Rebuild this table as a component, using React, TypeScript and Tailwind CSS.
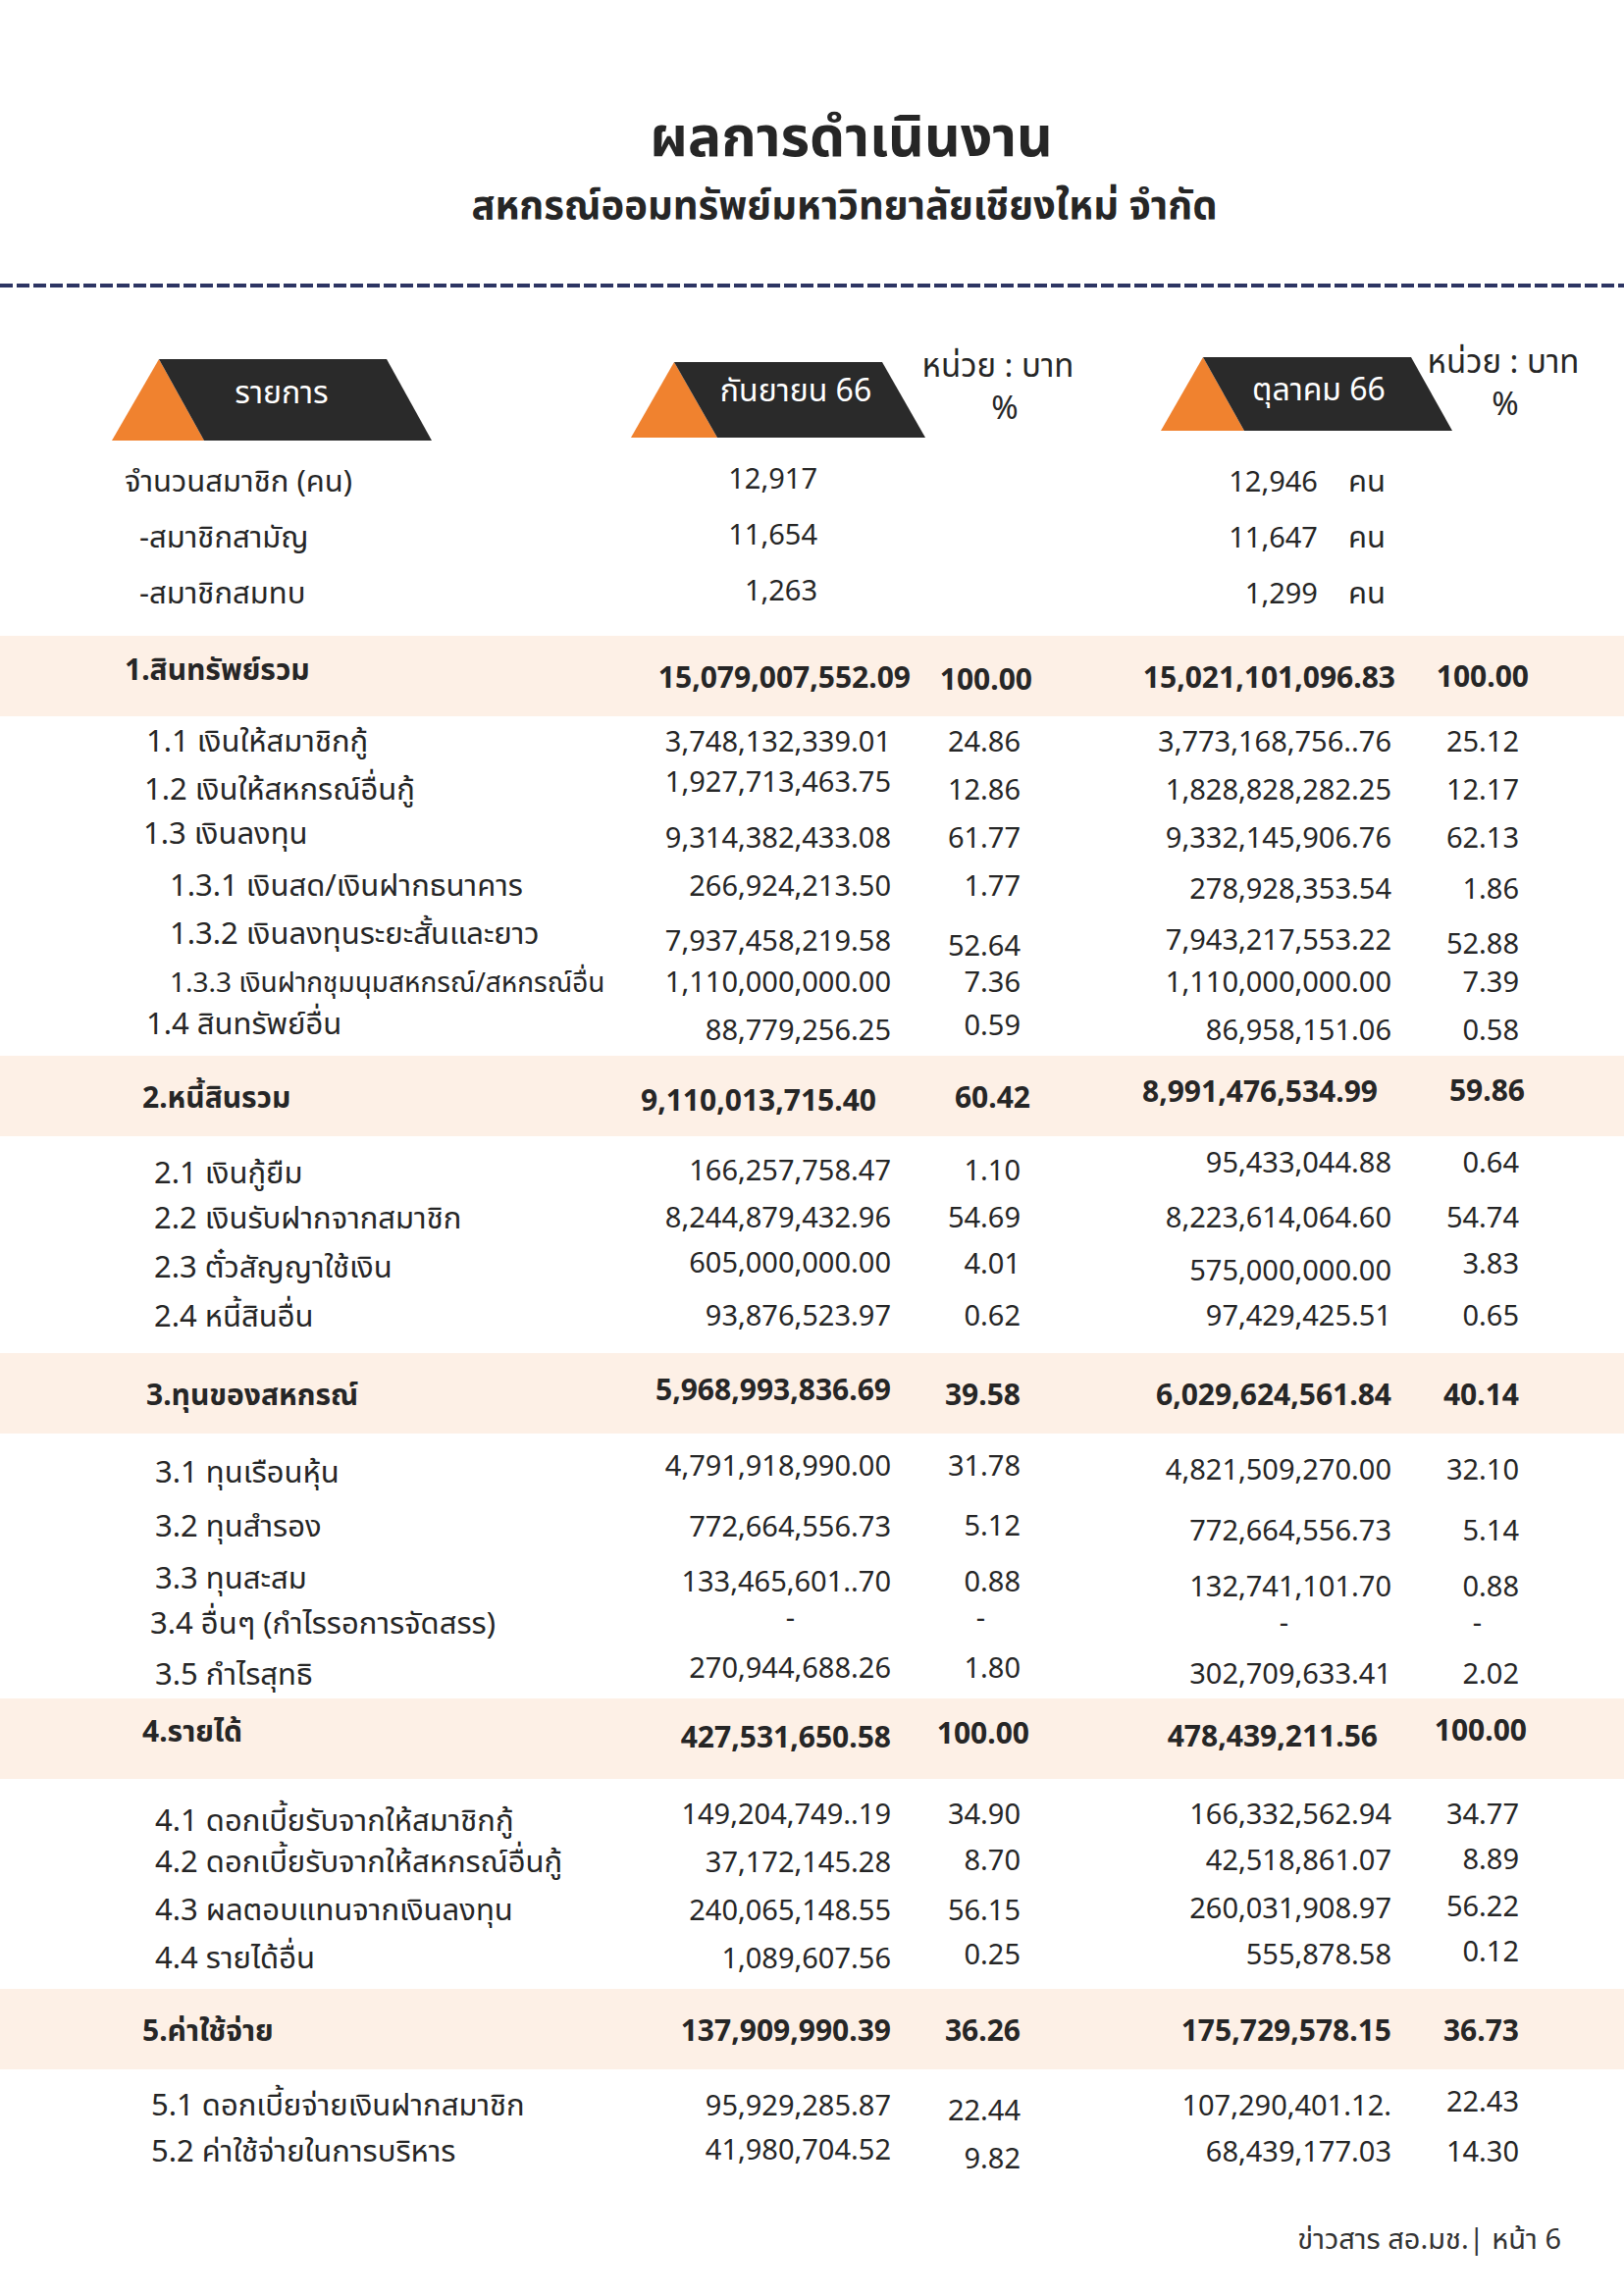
import React from "react";

// ตารางผลการดำเนินงาน เทียบ ก.ย. 66 / ต.ค. 66
type Fila = {
  t: string;
  v1: string;
  p1: string;
  v2: React.ReactNode;
  p2: string;
  pl: string;
  fs?: string; // ขนาดตัวอักษรของ label (ถ้าไม่ใช้ค่าปกติ)
  c?: string[]; // class เสริมของแต่ละช่อง [label, v1, p1, v2, p2]
};

const SECCIONES: { h: string; mt: string; band: Fila; filas: Fila[] }[] = [
  {
    h: "h-[49px]",
    mt: "mt-0",
    band: { t: "1.สินทรัพย์รวม", v1: "15,079,007,552.09", p1: "100.00", v2: "15,021,101,096.83", p2: "100.00", pl: "pl-[127px]", c: ["pb-[16px]", "-mr-[20px]", "-mr-[12px] pt-[4px]", "-mr-[4px]", "-mr-[10px] pb-[2px]"] },
    filas: [
      { t: "1.1 เงินให้สมาชิกกู้", v1: "3,748,132,339.01", p1: "24.86", v2: "3,773,168,756..76", p2: "25.12", pl: "pl-[149px]" },
      { t: "1.2 เงินให้สหกรณ์อื่นกู้", v1: "1,927,713,463.75", p1: "12.86", v2: "1,828,828,282.25", p2: "12.17", pl: "pl-[147px]", c: ["", "pb-[16px]"] },
      { t: "1.3 เงินลงทุน", v1: "9,314,382,433.08", p1: "61.77", v2: "9,332,145,906.76", p2: "62.13", pl: "pl-[146px]", c: ["pb-[8px]"] },
      { t: "1.3.1 เงินสด/เงินฝากธนาคาร", v1: "266,924,213.50", p1: "1.77", v2: "278,928,353.54", p2: "1.86", pl: "pl-[173px]", c: ["", "", "", "pt-[6px]", "pt-[6px]"] },
      { t: "1.3.2 เงินลงทุนระยะสั้นและยาว", v1: "7,937,458,219.58", p1: "52.64", v2: "7,943,217,553.22", p2: "52.88", pl: "pl-[173px]", c: ["", "pt-[14px]", "pt-[24px]", "pt-[12px]", "pt-[20px]"] },
      { t: "1.3.3 เงินฝากชุมนุมสหกรณ์/สหกรณ์อื่น", v1: "1,110,000,000.00", p1: "7.36", v2: "1,110,000,000.00", p2: "7.39", pl: "pl-[173px]", fs: "text-[28px]" },
      { t: "1.4 สินทรัพย์อื่น", v1: "88,779,256.25", p1: "0.59", v2: "86,958,151.06", p2: "0.58", pl: "pl-[149px]", c: ["pb-[12px]", "", "pb-[10px]"] },
    ],
  },
  {
    h: "h-[50px]",
    mt: "mt-[3px]",
    band: { t: "2.หนี้สินรวม", v1: "9,110,013,715.40", p1: "60.42", v2: "8,991,476,534.99", p2: "59.86", pl: "pl-[145px]", c: ["", "pr-[15px] pt-[6px]", "-mr-[10px]", "pr-[14px] pb-[12px]", "-mr-[6px] pb-[14px]"] },
    filas: [
      { t: "2.1 เงินกู้ยืม", v1: "166,257,758.47", p1: "1.10", v2: "95,433,044.88", p2: "0.64", pl: "pl-[157px]", c: ["pt-[8px]", "pt-[4px]", "pt-[4px]", "pb-[12px]", "pb-[12px]"] },
      { t: "2.2 เงินรับฝากจากสมาชิก", v1: "8,244,879,432.96", p1: "54.69", v2: "8,223,614,064.60", p2: "54.74", pl: "pl-[157px]" },
      { t: "2.3 ตั๋วสัญญาใช้เงิน", v1: "605,000,000.00", p1: "4.01", v2: "575,000,000.00", p2: "3.83", pl: "pl-[157px]", c: ["", "pb-[8px]", "pb-[6px]", "pt-[8px]", "pb-[6px]"] },
      { t: "2.4 หนี้สินอื่น", v1: "93,876,523.97", p1: "0.62", v2: "97,429,425.51", p2: "0.65", pl: "pl-[157px]" },
    ],
  },
  {
    h: "h-[52px]",
    mt: "mt-[14px]",
    band: { t: "3.ทุนของสหกรณ์", v1: "5,968,993,836.69", p1: "39.58", v2: "6,029,624,561.84", p2: "40.14", pl: "pl-[149px]", c: ["", "pb-[10px]"] },
    filas: [
      { t: "3.1 ทุนเรือนหุ้น", v1: "4,791,918,990.00", p1: "31.78", v2: "4,821,509,270.00", p2: "32.10", pl: "pl-[158px]", c: ["pt-[4px]", "pb-[8px]", "pb-[8px]"] },
      { t: "3.2 ทุนสำรอง", v1: "772,664,556.73", p1: "5.12", v2: "772,664,556.73", p2: "5.14", pl: "pl-[158px]", c: ["pt-[10px]", "pt-[12px]", "pt-[10px]", "pt-[20px]", "pt-[20px]"] },
      { t: "3.3 ทุนสะสม", v1: "133,465,601..70", p1: "0.88", v2: "132,741,101.70", p2: "0.88", pl: "pl-[158px]", c: ["pt-[12px]", "pt-[20px]", "pt-[20px]", "pt-[30px]", "pt-[30px]"] },
      { t: "3.4 อื่นๆ (กำไรรอการจัดสรร)", v1: "-", p1: "-", v2: "-", p2: "-", pl: "pl-[153px]", c: ["", "pr-[98px] pb-[10px]", "pr-[36px] pb-[10px]", "pr-[105px]", "pr-[38px]"] },
      { t: "3.5 กำไรสุทธิ", v1: "270,944,688.26", p1: "1.80", v2: "302,709,633.41", p2: "2.02", pl: "pl-[158px]", c: ["", "pb-[12px]", "pb-[12px]"] },
    ],
  },
  {
    h: "h-[49px]",
    mt: "mt-0",
    band: { t: "4.รายได้", v1: "427,531,650.58", p1: "100.00", v2: "478,439,211.56", p2: "100.00", pl: "pl-[145px]", c: ["pb-[18px]", "pb-[6px]", "-mr-[9px] pb-[14px]", "pr-[14px] pb-[8px]", "-mr-[8px] pb-[20px]"] },
    filas: [
      { t: "4.1 ดอกเบี้ยรับจากให้สมาชิกกู้", v1: "149,204,749..19", p1: "34.90", v2: "166,332,562.94", p2: "34.77", pl: "pl-[158px]", c: ["pt-[14px]"] },
      { t: "4.2 ดอกเบี้ยรับจากให้สหกรณ์อื่นกู้", v1: "37,172,145.28", p1: "8.70", v2: "42,518,861.07", p2: "8.89", pl: "pl-[158px]", c: ["", "", "pb-[4px]", "pb-[4px]", "pb-[6px]"] },
      { t: "4.3 ผลตอบแทนจากเงินลงทุน", v1: "240,065,148.55", p1: "56.15", v2: "260,031,908.97", p2: "56.22", pl: "pl-[158px]", c: ["", "", "", "pb-[4px]", "pb-[8px]"] },
      { t: "4.4 รายได้อื่น", v1: "1,089,607.56", p1: "0.25", v2: "555,878.58", p2: "0.12", pl: "pl-[158px]", c: ["", "", "pb-[8px]", "pb-[8px]", "pb-[14px]"] },
    ],
  },
  {
    h: "h-[47px]",
    mt: "mt-[8px]",
    band: { t: "5.ค่าใช้จ่าย", v1: "137,909,990.39", p1: "36.26", v2: "175,729,578.15", p2: "36.73", pl: "pl-[145px]" },
    filas: [
      { t: "5.1 ดอกเบี้ยจ่ายเงินฝากสมาชิก", v1: "95,929,285.87", p1: "22.44", v2: "107,290,401.12.", p2: "22.43", pl: "pl-[154px]", c: ["", "", "pt-[10px]", "", "pb-[8px]"] },
      { t: "5.2 ค่าใช้จ่ายในการบริหาร", v1: "41,980,704.52", p1: "9.82", v2: "68,439,177.03", p2: "14.30", pl: "pl-[154px]", c: ["", "pb-[4px]", "pt-[14px]"] },
    ],
  },
];

const SUB_MT = ["mt-0", "mt-[7px]", "mt-[10px]", "mt-[10px]", "mt-[12px]"];

// fila de altura fija: el desplazamiento de cada celda (pt/pb) no cambia la altura
const GRID = "grid grid-cols-[640px_268px_132px_378px_130px_1fr] grid-rows-[100%] items-center";

const Celdas = ({ f, etiqueta }: { f: Fila; etiqueta: string }) => {
  const c = f.c ?? [];
  return (
    <>
      <div className={`${f.pl} whitespace-nowrap ${f.fs ?? etiqueta} ${c[0] ?? ""}`}>{f.t}</div>
      <div className={`text-right whitespace-nowrap ${c[1] ?? ""}`}>{f.v1}</div>
      <div className={`text-right whitespace-nowrap ${c[2] ?? ""}`}>{f.p1}</div>
      <div className={`text-right whitespace-nowrap ${c[3] ?? ""}`}>{f.v2}</div>
      <div className={`text-right whitespace-nowrap ${c[4] ?? ""}`}>{f.p2}</div>
    </>
  );
};

// pestaña: triángulo naranja + paralelogramo oscuro
const Pestana = ({ w, h, a, b, texto, tx, ty, clase }: { w: number; h: number; a: number; b: number; texto: string; tx: number; ty: number; clase: string }) => (
  <div className={`relative shrink-0 ${clase}`} style={{ width: w, height: h }}>
    <svg width={w} height={h} className="absolute inset-0">
      <polygon points={`0,${h} ${a},0 ${b},${h}`} fill="#f0822f" />
      <polygon points={`${a},0 ${w - (b - a)},0 ${w},${h} ${b},${h}`} fill="#2a2a2a" />
    </svg>
    <span
      className="absolute -translate-x-1/2 -translate-y-1/2 text-white text-[32px] leading-none whitespace-nowrap"
      style={{ left: tx, top: ty }}
    >
      {texto}
    </span>
  </div>
);

export default function App() {
  return (
    <div className="w-[1655px] min-h-[2340px] bg-white text-[#262626] font-['Noto_Sans','Noto_Sans_Thai',sans-serif] text-[29px]">
      {/* TITULO */}
      <div className="pt-[104px] flex flex-col items-center">
        <h1 className="ml-[80px] text-[57px] leading-[66px] font-bold">ผลการดำเนินงาน</h1>
        <h2 className="ml-[66px] mt-[14px] text-[40px] leading-[48px] font-bold">สหกรณ์ออมทรัพย์มหาวิทยาลัยเชียงใหม่ จำกัด</h2>
      </div>

      <div className="mt-[57px] h-[4px] bg-[repeating-linear-gradient(90deg,#2d3563_0_13px,transparent_13px_17px)]" />

      {/* CABECERA */}
      <div className="mt-[57px] flex items-start">
        <Pestana w={326} h={83} a={48} b={94} texto="รายการ" tx={173} ty={33} clase="ml-[114px] mt-[16px]" />
        <Pestana w={300} h={77} a={44} b={88} texto="กันยายน 66" tx={168} ty={28} clase="ml-[203px] mt-[19px]" />
        <div className="-ml-[3px] mt-[4px] w-[154px] flex flex-col items-center leading-[36px] text-[33px]">
          <span className="whitespace-nowrap">หน่วย : บาท</span>
          <span className="mt-[7px] ml-[14px]">%</span>
        </div>
        <Pestana w={297} h={75} a={43} b={85} texto="ตุลาคม 66" tx={161} ty={32} clase="ml-[89px] mt-[14px]" />
        <div className="-ml-[25px] w-[154px] flex flex-col items-center leading-[36px] text-[33px]">
          <span className="whitespace-nowrap">หน่วย : บาท</span>
          <span className="mt-[7px] ml-[4px]">%</span>
        </div>
      </div>

      {/* SOCIOS */}
      <div className="mt-[12px]">
        {[
          { t: "จำนวนสมาชิก (คน)", v1: "12,917", v2: "12,946", pl: "pl-[127px]" },
          { t: "-สมาชิกสามัญ", v1: "11,654", v2: "11,647", pl: "pl-[142px]" },
          { t: "-สมาชิกสมทบ", v1: "1,263", v2: "1,299", pl: "pl-[142px]" },
        ].map((s) => (
          <div key={s.t} className={`${GRID} h-[57px]`}>
            <div className={`${s.pl} whitespace-nowrap text-[31px]`}>{s.t}</div>
            <div className="text-right pr-[75px] pb-[6px]">{s.v1}</div>
            <div />
            <div className="text-right pr-[6px]">
              {s.v2}
              <span className="ml-[31px] text-[31px]">คน</span>
            </div>
            <div />
          </div>
        ))}
      </div>

      {/* SECCIONES */}
      {SECCIONES.map((sec, i) => (
        <div key={sec.band.t} className={i === 0 ? "mt-[16px]" : sec.mt}>
          <div className={`${GRID} h-[82px] bg-[#fdf0e6] font-bold text-[30px]`}>
            <Celdas f={sec.band} etiqueta="text-[30px]" />
          </div>
          <div className={SUB_MT[i]}>
            {sec.filas.map((f) => (
              <div key={f.t} className={`${GRID} ${sec.h}`}>
                <Celdas f={f} etiqueta="text-[31px]" />
              </div>
            ))}
          </div>
        </div>
      ))}

      {/* PIE */}
      <div className="mt-[48px] pr-[64px] text-right text-[29px] leading-[36px] text-[#333]">ข่าวสาร สอ.มช.| หน้า 6</div>
    </div>
  );
}
